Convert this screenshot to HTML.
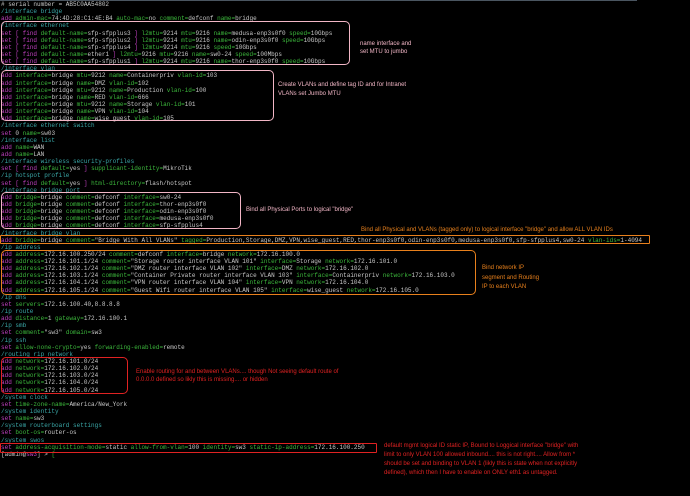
<!DOCTYPE html>
<html><head><meta charset="utf-8"><style>
html,body{margin:0;padding:0;background:#000;width:690px;height:496px;overflow:hidden;position:relative}
#t{position:absolute;left:1px;top:1px;font-family:"Liberation Mono",monospace;font-size:6px;line-height:7.14px;color:#c8c8c8;white-space:pre}
.m{color:#c040c0}.g{color:#3cb83c}.c{color:#3aa8a8}.w{color:#c8c8c8}
.b{position:absolute;border:1px solid;border-radius:5px;box-sizing:border-box}
.a{position:absolute;font-family:"Liberation Sans",sans-serif;font-size:6px;line-height:9px;white-space:pre}
.p{color:#f2b6c6}.o{color:#e8801c}.r{color:#e02222}
</style></head><body>
<div style="position:absolute;left:0;top:0;width:637px;height:1px;background:#4a5560"></div>
<div id="t"><span class=w># serial number = AB5C0AA54802</span>
<span class=c>/interface bridge</span>
<span class=m>add</span> <span class=g>admin-mac=</span>74:4D:28:C1:4E:B4 <span class=g>auto-mac=</span>no <span class=g>comment=</span>defconf <span class=g>name=</span>bridge
<span class=c>/interface ethernet</span>
<span class=m>set [ find</span> <span class=g>default-name=</span>sfp-sfpplus3 <span class=m>]</span> <span class=g>l2mtu=</span>9214 <span class=g>mtu=</span>9216 <span class=g>name=</span>medusa-enp3s0f0 <span class=g>speed=</span>10Gbps
<span class=m>set [ find</span> <span class=g>default-name=</span>sfp-sfpplus2 <span class=m>]</span> <span class=g>l2mtu=</span>9214 <span class=g>mtu=</span>9216 <span class=g>name=</span>odin-enp3s0f0 <span class=g>speed=</span>10Gbps
<span class=m>set [ find</span> <span class=g>default-name=</span>sfp-sfpplus4 <span class=m>]</span> <span class=g>l2mtu=</span>9214 <span class=g>mtu=</span>9216 <span class=g>speed=</span>10Gbps
<span class=m>set [ find</span> <span class=g>default-name=</span>ether1 <span class=m>]</span> <span class=g>l2mtu=</span>9216 <span class=g>mtu=</span>9216 <span class=g>name=</span>sw0-24 <span class=g>speed=</span>100Mbps
<span class=m>set [ find</span> <span class=g>default-name=</span>sfp-sfpplus1 <span class=m>]</span> <span class=g>l2mtu=</span>9214 <span class=g>mtu=</span>9216 <span class=g>name=</span>thor-enp3s0f0 <span class=g>speed=</span>10Gbps
<span class=c>/interface vlan</span>
<span class=m>add</span> <span class=g>interface=</span>bridge <span class=g>mtu=</span>9212 <span class=g>name=</span>Containerpriv <span class=g>vlan-id=</span>103
<span class=m>add</span> <span class=g>interface=</span>bridge <span class=g>name=</span>DMZ <span class=g>vlan-id=</span>102
<span class=m>add</span> <span class=g>interface=</span>bridge <span class=g>mtu=</span>9212 <span class=g>name=</span>Production <span class=g>vlan-id=</span>100
<span class=m>add</span> <span class=g>interface=</span>bridge <span class=g>name=</span>RED <span class=g>vlan-id=</span>666
<span class=m>add</span> <span class=g>interface=</span>bridge <span class=g>mtu=</span>9212 <span class=g>name=</span>Storage <span class=g>vlan-id=</span>101
<span class=m>add</span> <span class=g>interface=</span>bridge <span class=g>name=</span>VPN <span class=g>vlan-id=</span>104
<span class=m>add</span> <span class=g>interface=</span>bridge <span class=g>name=</span>wise_guest <span class=g>vlan-id=</span>105
<span class=c>/interface ethernet switch</span>
<span class=m>set</span> 0 <span class=g>name=</span>sw03
<span class=c>/interface list</span>
<span class=m>add</span> <span class=g>name=</span>WAN
<span class=m>add</span> <span class=g>name=</span>LAN
<span class=c>/interface wireless security-profiles</span>
<span class=m>set [ find</span> <span class=g>default=</span>yes <span class=m>]</span> <span class=g>supplicant-identity=</span>MikroTik
<span class=c>/ip hotspot profile</span>
<span class=m>set [ find</span> <span class=g>default=</span>yes <span class=m>]</span> <span class=g>html-directory=</span>flash/hotspot
<span class=c>/interface bridge port</span>
<span class=m>add</span> <span class=g>bridge=</span>bridge <span class=g>comment=</span>defconf <span class=g>interface=</span>sw0-24
<span class=m>add</span> <span class=g>bridge=</span>bridge <span class=g>comment=</span>defconf <span class=g>interface=</span>thor-enp3s0f0
<span class=m>add</span> <span class=g>bridge=</span>bridge <span class=g>comment=</span>defconf <span class=g>interface=</span>odin-enp3s0f0
<span class=m>add</span> <span class=g>bridge=</span>bridge <span class=g>comment=</span>defconf <span class=g>interface=</span>medusa-enp3s0f0
<span class=m>add</span> <span class=g>bridge=</span>bridge <span class=g>comment=</span>defconf <span class=g>interface=</span>sfp-sfpplus4
<span class=c>/interface bridge vlan</span>
<span class=m>add</span> <span class=g>bridge=</span>bridge <span class=g>comment=</span>"Bridge With All VLANs" <span class=g>tagged=</span>Production,Storage,DMZ,VPN,wise_guest,RED,thor-enp3s0f0,odin-enp3s0f0,medusa-enp3s0f0,sfp-sfpplus4,sw0-24 <span class=g>vlan-ids=</span>1-4094
<span class=c>/ip address</span>
<span class=m>add</span> <span class=g>address=</span>172.16.100.250/24 <span class=g>comment=</span>defconf <span class=g>interface=</span>bridge <span class=g>network=</span>172.16.100.0
<span class=m>add</span> <span class=g>address=</span>172.16.101.1/24 <span class=g>comment=</span>"Storage router interface VLAN 101" <span class=g>interface=</span>Storage <span class=g>network=</span>172.16.101.0
<span class=m>add</span> <span class=g>address=</span>172.16.102.1/24 <span class=g>comment=</span>"DMZ router interface VLAN 102" <span class=g>interface=</span>DMZ <span class=g>network=</span>172.16.102.0
<span class=m>add</span> <span class=g>address=</span>172.16.103.1/24 <span class=g>comment=</span>"Container Private router interface VLAN 103" <span class=g>interface=</span>Containerpriv <span class=g>network=</span>172.16.103.0
<span class=m>add</span> <span class=g>address=</span>172.16.104.1/24 <span class=g>comment=</span>"VPN router interface VLAN 104" <span class=g>interface=</span>VPN <span class=g>network=</span>172.16.104.0
<span class=m>add</span> <span class=g>address=</span>172.16.105.1/24 <span class=g>comment=</span>"Guest Wifi router interface VLAN 105" <span class=g>interface=</span>wise_guest <span class=g>network=</span>172.16.105.0
<span class=c>/ip dns</span>
<span class=m>set</span> <span class=g>servers=</span>172.16.100.40,8.8.8.8
<span class=c>/ip route</span>
<span class=m>add</span> <span class=g>distance=</span>1 <span class=g>gateway=</span>172.16.100.1
<span class=c>/ip smb</span>
<span class=m>set</span> <span class=g>comment=</span>"sw3" <span class=g>domain=</span>sw3
<span class=c>/ip ssh</span>
<span class=m>set</span> <span class=g>allow-none-crypto=</span>yes <span class=g>forwarding-enabled=</span>remote
<span class=c>/routing rip network</span>
<span class=m>add</span> <span class=g>network=</span>172.16.101.0/24
<span class=m>add</span> <span class=g>network=</span>172.16.102.0/24
<span class=m>add</span> <span class=g>network=</span>172.16.103.0/24
<span class=m>add</span> <span class=g>network=</span>172.16.104.0/24
<span class=m>add</span> <span class=g>network=</span>172.16.105.0/24
<span class=c>/system clock</span>
<span class=m>set</span> <span class=g>time-zone-name=</span>America/New_York
<span class=c>/system identity</span>
<span class=m>set</span> <span class=g>name=</span>sw3
<span class=c>/system routerboard settings</span>
<span class=m>set</span> <span class=g>boot-os=</span>router-os
<span class=c>/system swos</span>
<span class=m>set</span> <span class=g>address-acquisition-mode=</span>static <span class=g>allow-from-vlan=</span>100 <span class=g>identity=</span>sw3 <span class=g>static-ip-address=</span>172.16.100.250
[admin@<span class=m>sw3</span>] &gt; <span class=g>[</span></div>

<div class="b" style="left:1px;top:21px;width:349px;height:44px;border-color:#f2b6c6"></div>
<div class="b" style="left:1px;top:70px;width:273px;height:51px;border-color:#f2b6c6"></div>
<div class="b" style="left:1px;top:192px;width:240px;height:37px;border-color:#f2b6c6"></div>
<div class="b" style="left:0;top:235px;width:650px;height:9px;border-color:#e8801c;border-radius:1px"></div>
<div class="b" style="left:1px;top:250px;width:475px;height:45px;border-color:#e8801c"></div>
<div class="b" style="left:1px;top:357px;width:127px;height:37px;border-color:#e02222"></div>
<div class="b" style="left:0;top:443px;width:377px;height:10px;border-color:#e02222;border-radius:1px"></div>

<div class="a p" style="left:360px;top:40px;line-height:8px">name interface and
set MTU to jumbo</div>
<div class="a p" style="left:278px;top:81px">Create VLANs and define tag ID and for Intranet
VLANs set Jumbo MTU</div>
<div class="a p" style="left:246px;top:206px">Bind all Physical Ports to logical "bridge"</div>
<div class="a o" style="left:361px;top:226px">Bind all Physical and VLANs (tagged only) to logical interface "bridge" and allow ALL VLAN IDs</div>
<div class="a o" style="left:482px;top:264px;line-height:9.5px">Bind network IP
segment and Routing
IP to each VLAN</div>
<div class="a r" style="left:136px;top:368px;line-height:8px">Enable routing for and between VLANs.... though Not seeing default route of
0.0.0.0 defined so likly this is missing.... or hidden</div>
<div class="a r" style="left:384px;top:442px;line-height:9px">default mgmt logical ID static IP, Bound to Loggical interface "bridge" with
limit to only VLAN 100 allowed inbound.... this is not right.... Allow from *
should be set and binding to VLAN 1 (likly this is state when not explicitly
defined), which then I have to enable on ONLY eth1 as untagged.</div>
</body></html>
